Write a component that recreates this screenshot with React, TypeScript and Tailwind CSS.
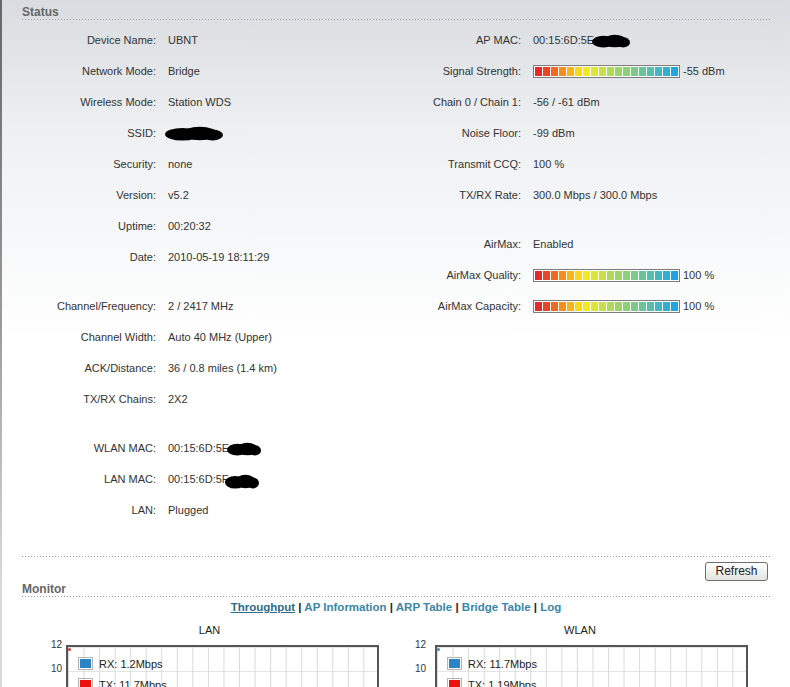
import React from 'react';

const SEGMENTS = [
  '#e52a2b', '#ea4528', '#f06a24', '#f48e1f', '#f7b51a', '#f9d817',
  '#f2ea1c', '#dde637', '#c6df4b', '#b0d95c', '#9dd36b', '#8ecf7a',
  '#7cca8b', '#69c49c', '#57bead', '#43b6bf', '#31aed0', '#1fa6de',
];

function Bar({ text }: { text: string }) {
  return (
    <div className="flex items-center">
      <div className="flex gap-[1px] border border-[#7d7d7d] bg-white p-px">
        {SEGMENTS.map((c) => (
          <div key={c} className="h-[9px] w-[7px]" style={{ background: c }} />
        ))}
      </div>
      <span className="ml-[3px]">{text}</span>
    </div>
  );
}

// black scribble used to hide parts of a value
function Blob({ w, h }: { w: number; h: number }) {
  return (
    <svg width={w} height={h} viewBox={`0 0 ${w} ${h}`} className="inline-block">
      <ellipse cx={w * 0.3} cy={h * 0.55} rx={w * 0.3} ry={h * 0.42} fill="#000" />
      <ellipse cx={w * 0.6} cy={h * 0.5} rx={w * 0.3} ry={h * 0.45} fill="#000" />
      <ellipse cx={w * 0.82} cy={h * 0.6} rx={w * 0.18} ry={h * 0.36} fill="#000" />
    </svg>
  );
}

type Row = { label: string; value: React.ReactNode } | null;

const left: Row[] = [
  { label: 'Device Name:', value: 'UBNT' },
  { label: 'Network Mode:', value: 'Bridge' },
  { label: 'Wireless Mode:', value: 'Station WDS' },
  { label: 'SSID:', value: <span className="-ml-[3px] flex"><Blob w={58} h={15} /></span> },
  { label: 'Security:', value: 'none' },
  { label: 'Version:', value: 'v5.2' },
  { label: 'Uptime:', value: '00:20:32' },
  { label: 'Date:', value: '2010-05-19 18:11:29' },
  null,
  { label: 'Channel/Frequency:', value: '2 / 2417 MHz' },
  { label: 'Channel Width:', value: 'Auto 40 MHz (Upper)' },
  { label: 'ACK/Distance:', value: '36 / 0.8 miles (1.4 km)' },
  { label: 'TX/RX Chains:', value: '2X2' },
  null,
  { label: 'WLAN MAC:', value: <span className="flex items-center">00:15:6D:5E<span className="-ml-[2px] flex"><Blob w={34} h={14} /></span></span> },
  { label: 'LAN MAC:', value: <span className="flex items-center">00:15:6D:5F<span className="-ml-[4px] mt-[4px] flex"><Blob w={34} h={15} /></span></span> },
  { label: 'LAN:', value: 'Plugged' },
];

const right: Row[] = [
  { label: 'AP MAC:', value: <span className="flex items-center">00:15:6D:5E<span className="-ml-[2px] flex"><Blob w={38} h={14} /></span></span> },
  { label: 'Signal Strength:', value: <Bar text="-55 dBm" /> },
  { label: 'Chain 0 / Chain 1:', value: '-56 / -61 dBm' },
  { label: 'Noise Floor:', value: '-99 dBm' },
  { label: 'Transmit CCQ:', value: '100 %' },
  { label: 'TX/RX Rate:', value: '300.0 Mbps / 300.0 Mbps' },
  null,
  { label: 'AirMax:', value: 'Enabled' },
  { label: 'AirMax Quality:', value: <Bar text="100 %" /> },
  { label: 'AirMax Capacity:', value: <Bar text="100 %" /> },
];

function Column({ rows, labelW, width }: { rows: Row[]; labelW: string; width: string }) {
  return (
    <div className={`flex flex-col ${width}`}>
      {rows.map((r, i) =>
        r ? (
          <div key={i} className="flex h-[31px] items-center gap-[12px]">
            <div className={`${labelW} shrink-0 text-right`}>{r.label}</div>
            <div>{r.value}</div>
          </div>
        ) : (
          <div key={i} className="h-[18px]" />
        )
      )}
    </div>
  );
}

function Dots() {
  return <div className="h-px w-full bg-[linear-gradient(to_right,#9a9a9a_1px,transparent_1px)] bg-[length:3px_1px]" />;
}

function Heading({ title }: { title: string }) {
  return (
    <div>
      <div className="text-[12px] font-bold leading-[14px] text-[#666]">{title}</div>
      <Dots />
    </div>
  );
}

function Chart({ title, rx, tx, labelW, gap, dot }: { title: string; rx: string; tx: string; labelW: string; gap: string; dot: string }) {
  return (
    <div className="flex flex-col">
      <div className="text-center text-[11px] leading-[13px] text-[#222]">{title}</div>
      <div className={`mt-[8px] flex ${gap}`}>
        <div className={`${labelW} -mt-[6px] flex flex-col text-right text-[10px] leading-[12px] text-[#333]`}>
          <span>12</span>
          <span className="mt-[12px]">10</span>
        </div>
        <div className="relative h-[260px] w-[313px] border-2 border-[#555] bg-[linear-gradient(to_right,#d9d9d9_1px,transparent_1px),linear-gradient(to_bottom,#e4e4e4_1px,transparent_1px)] bg-[length:15.55px_24px] bg-white">
          <span className={`absolute left-0 top-[1px] h-[3px] w-[3px] rounded-full ${dot}`} />
          <div className="flex flex-col gap-[8px] pl-[10px] pt-[10px] text-[11px] leading-[12px] text-[#222]">
            <div className="flex items-center gap-[6px]">
              <span className="h-[13px] w-[15px] border border-[#b5b5b5] p-px"><span className="block h-full w-full bg-[#2b84c6]" /></span>
              <span>RX: {rx}</span>
            </div>
            <div className="flex items-center gap-[6px]">
              <span className="h-[13px] w-[15px] border border-[#b5b5b5] p-px"><span className="block h-full w-full bg-[#ee0f0f]" /></span>
              <span>TX: {tx}</span>
            </div>
          </div>
        </div>
      </div>
    </div>
  );
}

export default function App() {
  return (
    <div className="flex min-h-screen font-['Liberation_Sans',Arial,sans-serif] text-[11px] text-[#333]">
      <div className="w-[2px] shrink-0 bg-[linear-gradient(to_bottom,#666_0%,#9a9a9a_35%,#dadada_65%)]" />
      <div className="flex-1 bg-[linear-gradient(to_bottom,#d9dce0_0px,#eef0f2_130px,#ffffff_340px)] px-[20px] pt-[5px]">
        <Heading title="Status" />
        <div className="mt-[5px] flex">
          <Column rows={left} labelW="w-[134px]" width="w-[374px]" />
          <Column rows={right} labelW="w-[125px]" width="flex-1" />
        </div>
        <div className="mt-[30px]">
          <Dots />
        </div>
        <div className="mt-[5px] flex justify-end pr-[2px]">
          <button className="h-[19px] w-[63px] rounded-[3px] border border-[#6e6e6e] bg-[linear-gradient(to_bottom,#ffffff,#e4e4e0)] text-[12px] leading-[15px] text-[#222]">
            Refresh
          </button>
        </div>
        <div className="mt-[1px]">
          <Heading title="Monitor" />
        </div>
        <div className="mt-[4px] text-center text-[11.5px] font-bold leading-[13px] text-[#222]">
          <a className="text-[#2d6c8c] underline">Throughput</a>
          {' | '}
          <a className="text-[#3a85aa]">AP Information</a>
          {' | '}
          <a className="text-[#3a85aa]">ARP Table</a>
          {' | '}
          <a className="text-[#3a85aa]">Bridge Table</a>
          {' | '}
          <a className="text-[#3a85aa]">Log</a>
        </div>
        <div className="mt-[10px] flex">
          <div className="ml-[18px]">
            <Chart title="LAN" rx="1.2Mbps" tx="11.7Mbps" labelW="w-[22px]" gap="gap-[4px]" dot="bg-[#e33]" />
          </div>
          <div className="ml-[33px]">
            <Chart title="WLAN" rx="11.7Mbps" tx="1.19Mbps" labelW="w-[14px]" gap="gap-[9px]" dot="bg-[#3b8fc4]" />
          </div>
        </div>
      </div>
    </div>
  );
}
